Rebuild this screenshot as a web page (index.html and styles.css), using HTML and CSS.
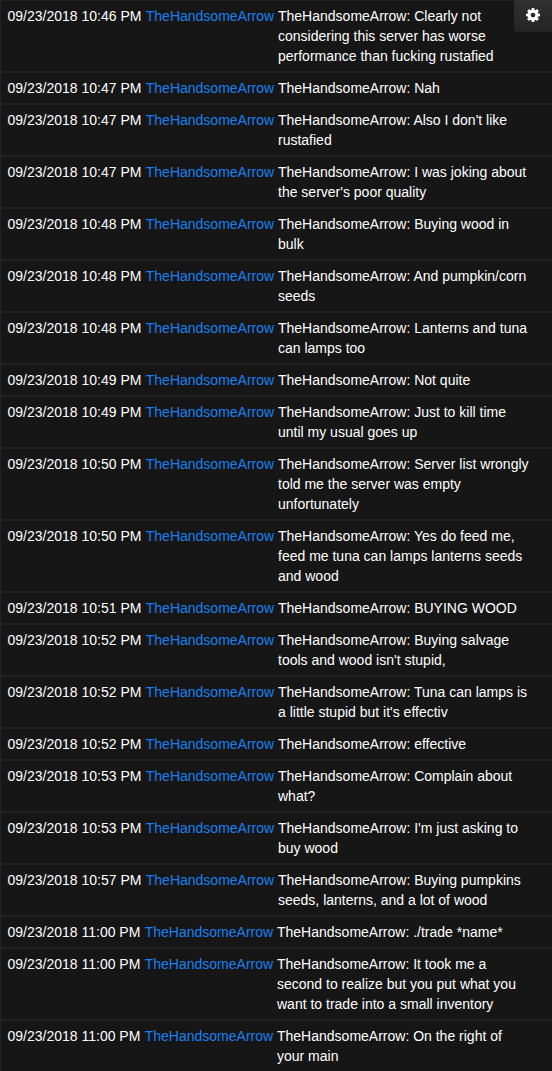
FILE: index.html
```
<!DOCTYPE html>
<html lang="en"><head><meta charset="utf-8"><title>Chat log</title><link rel="stylesheet" href="styles.css"></head>
<body>
<button class="settings" aria-label="Settings"><svg class="gear" viewBox="0 0 1536 1536"><path fill="currentColor" d="M1024 768q0-106-75-181t-181-75-181 75-75 181 75 181 181 75 181-75 75-181zm512-109v222q0 12-8 23t-20 13l-185 28q-19 54-39 91 35 50 107 138 10 12 10 25t-9 23q-27 37-99 108t-94 71q-12 0-26-9l-138-108q-44 23-91 38-16 136-29 186-7 28-36 28H657q-14 0-24.500-8.500T621 1506l-28-184q-49-16-90-37l-141 107q-10 9-25 9-14 0-25-11-126-114-165-168-7-10-7-23 0-12 8-23 15-21 51-66.500t54-70.500q-27-50-41-99L29 913q-13-2-21-12.500T0 877V655q0-12 8-23t19-13l186-28q14-46 39-92-40-57-107-138-10-12-10-24 0-10 9-23 26-36 98.500-107.500T337 135q13 0 26 10l138 107q44-23 91-38 16-136 29-186 7-28 36-28h222q14 0 24.500 8.500T915 30l28 184q49 16 90 37l142-107q9-9 24-9 13 0 25 10 129 119 165 170 7 8 7 22 0 12-8 23-15 21-51 66.500t-54 70.500q26 50 41 98l183 28q13 2 21 12.500t8 23.500z"/></svg></button>
<main class="log" id="log"></main>
<script src="log.js"></script>
</body></html>
```
FILE: styles.css
```
* { box-sizing: border-box; }
body { margin: 0; height: 1071px; overflow: hidden; background: #161616; color: #fff; font: 14px/20px "Liberation Sans", Arial, sans-serif; }
.row { display: flex; padding: 5px 6.5px; border: 1px solid #222; border-right: 0; white-space: nowrap; }
.meta { width: 270.5px; flex: none; }
.late .meta { width: 269.5px; }
.user { margin-left: 0.5px; color: #1880f0; }
.message { white-space: pre; }
.settings { position: absolute; right: 0; top: 0; width: 38px; height: 32px; padding: 0 1px 2px 0; display: flex; align-items: center; justify-content: center; color: #fff; background: linear-gradient(#303030, #242424); border: 0; border-radius: 0 0 0 4px; }
.gear { width: 14px; height: 14px; }
```
FILE: log.js
```
const messages = [
  ["10:46", "Clearly not\nconsidering this server has worse\nperformance than fucking rustafied"],
  ["10:47", "Nah"],
  ["10:47", "Also I don't like\nrustafied"],
  ["10:47", "I was joking about\nthe server's poor quality"],
  ["10:48", "Buying wood in\nbulk"],
  ["10:48", "And pumpkin/corn\nseeds"],
  ["10:48", "Lanterns and tuna\ncan lamps too"],
  ["10:49", "Not quite"],
  ["10:49", "Just to kill time\nuntil my usual goes up"],
  ["10:50", "Server list wrongly\ntold me the server was empty\nunfortunately"],
  ["10:50", "Yes do feed me,\nfeed me tuna can lamps lanterns seeds\nand wood"],
  ["10:51", "BUYING WOOD"],
  ["10:52", "Buying salvage\ntools and wood isn't stupid,"],
  ["10:52", "Tuna can lamps is\na little stupid but it's effectiv"],
  ["10:52", "effective"],
  ["10:53", "Complain about\nwhat?"],
  ["10:53", "I'm just asking to\nbuy wood"],
  ["10:57", "Buying pumpkins\nseeds, lanterns, and a lot of wood"],
  ["11:00", "./trade *name*"],
  ["11:00", "It took me a\nsecond to realize but you put what you\nwant to trade into a small inventory"],
  ["11:00", "On the right of\nyour main"]
];
document.getElementById("log").innerHTML = messages.map(([time, text]) =>
  `<div class="row${time === "11:00" ? " late" : ""}"><div class="meta">09/23/2018 ${time} PM <span class="user">TheHandsomeArrow</span></div><div class="message">TheHandsomeArrow: ${text}</div></div>`
).join("");
```
